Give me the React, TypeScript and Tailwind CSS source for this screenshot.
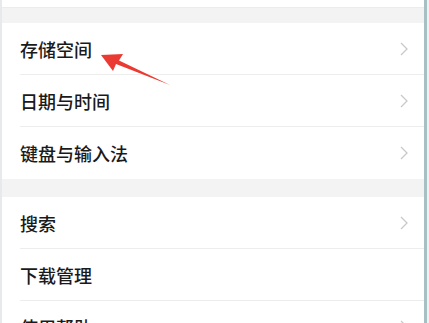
import React from "react";

const groups = [
  [
    { label: "存储空间", arrow: true },
    { label: "日期与时间", arrow: true },
    { label: "键盘与输入法", arrow: true },
  ],
  [
    { label: "搜索", arrow: true },
    { label: "下载管理", arrow: false },
    { label: "使用帮助", arrow: true },
  ],
];

function Chevron() {
  return (
    <svg width="8" height="14" viewBox="0 0 8 14" className="shrink-0">
      <path d="M1 1 L7 7 L1 13" fill="none" stroke="#c9c9c9" strokeWidth="1.3" />
    </svg>
  );
}

export default function App() {
  return (
    <div
      className="relative w-[429px] h-[323px] overflow-hidden bg-[#f3f3f3] flex"
      style={{ fontFamily: '"Noto Sans CJK SC", "Noto Sans", sans-serif' }}
    >
      <div className="w-[2px] bg-[#e6eaea] shrink-0" />
      <div className="flex-1 flex flex-col">
        <div className="h-[8px] shrink-0 bg-white border-b border-[#ececec]" />
        <div className="h-[15px] shrink-0" />
        {groups.map((g, gi) => (
          <div key={gi} className={`shrink-0 bg-white ${gi > 0 ? "mt-[18px]" : ""}`}>
            {g.map((row, i) => (
              <div key={row.label} className="pl-[18px]">
                <div
                  className={`h-[52px] flex items-center justify-between pr-[16px] ${
                    i < g.length - 1 ? "border-b border-[#ededed]" : ""
                  }`}
                >
                  <span className="text-[18px] font-medium text-[#1a1a1a] leading-none">{row.label}</span>
                  {row.arrow && <Chevron />}
                </div>
              </div>
            ))}
          </div>
        ))}
      </div>
      <div className="w-[3px] bg-[#a9c0c3] shrink-0" />
      <div className="w-[2px] bg-[#eef2f2] shrink-0" />

      <svg className="absolute left-0 top-0 pointer-events-none" width="429" height="323">
        <polygon
          points="101,55 123,54 119,60.5 170,85 116,64 113,71"
          fill="#ea3a32"
        />
      </svg>
    </div>
  );
}
